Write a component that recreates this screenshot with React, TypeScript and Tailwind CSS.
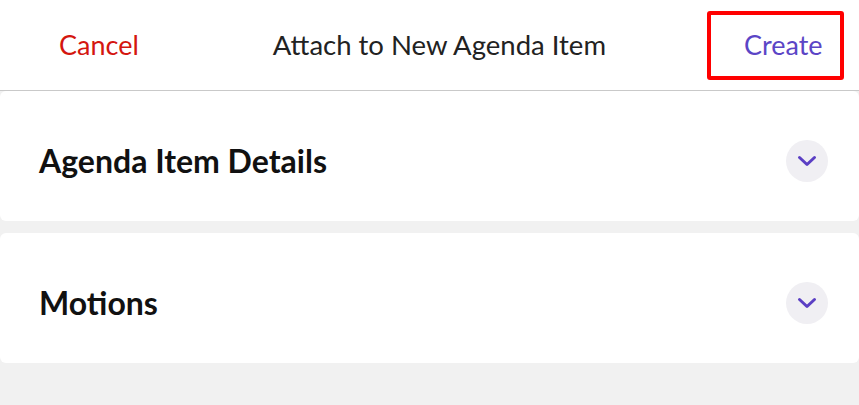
import React from "react";

function Chevron() {
  return (
    <svg width="20" height="12" viewBox="0 0 20 12" fill="none">
      <path d="M2.5 2.5 L10 9.5 L17.5 2.5" stroke="#5b3fc4" strokeWidth="3" strokeLinecap="round" strokeLinejoin="round" />
    </svg>
  );
}

function Card({ title }: { title: string }) {
  return (
    <div className="flex h-[130px] items-center justify-between rounded-[6px] bg-white pl-[39px] pr-[31px] pt-[10px]">
      <span className="text-[32px] font-bold text-[#111]">{title}</span>
      <div className="flex h-[42px] w-[42px] items-center justify-center rounded-full bg-[#f0eff3]">
        <Chevron />
      </div>
    </div>
  );
}

export default function App() {
  return (
    <div className="flex h-[405px] w-[859px] flex-col bg-[#f1f1f1]" style={{ fontFamily: "Lato, 'Open Sans', sans-serif" }}>
      <div className="flex h-[91px] shrink-0 items-center border-b border-[#c9c9c9] bg-white">
        <span className="pl-[59px] text-[27px] text-[#d4160f]">Cancel</span>
        <span className="ml-[134px] text-[27.5px] text-[#222]">Attach to New Agenda Item</span>
        <div className="ml-auto mr-[15px] flex h-[69px] w-[137px] items-center rounded-[3px] border-[4px] border-[#ff0000] pl-[33px]">
          <span className="text-[27px] text-[#5b45c6]">Create</span>
        </div>
      </div>
      <div className="flex flex-col gap-[12px]">
        <Card title="Agenda Item Details" />
        <Card title="Motions" />
      </div>
    </div>
  );
}
